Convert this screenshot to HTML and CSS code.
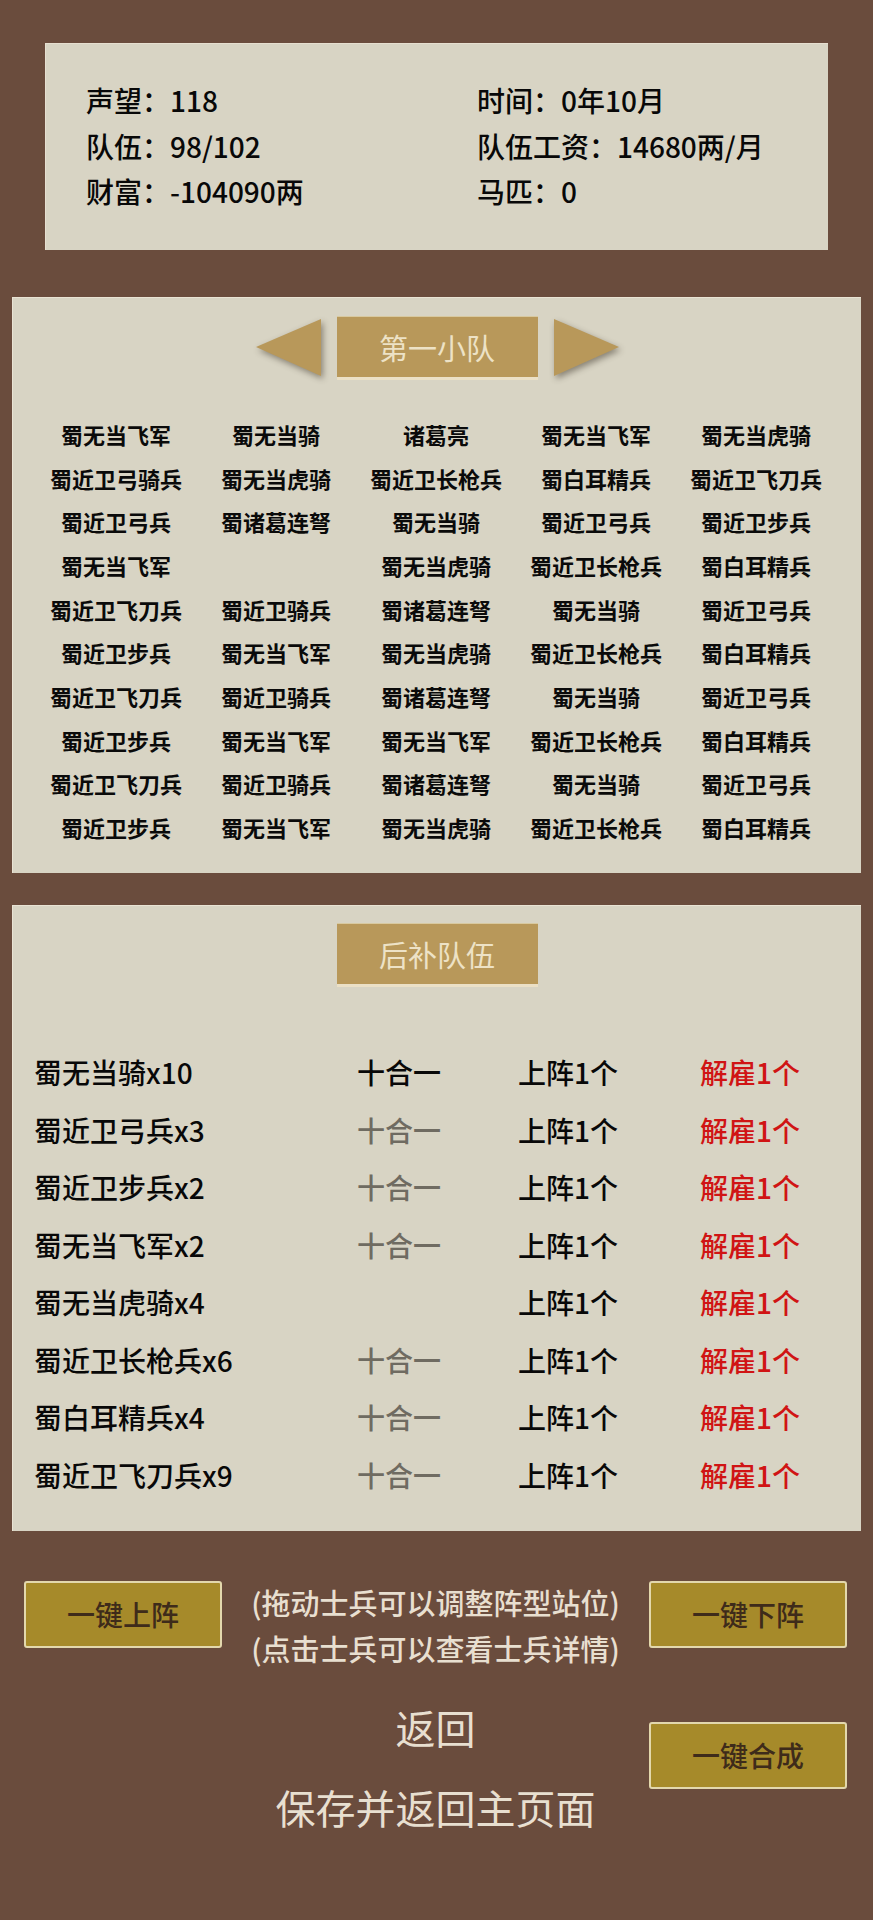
FILE: index.html
```html
<!DOCTYPE html>
<html lang="zh-CN">
<head>
<meta charset="utf-8">
<title>队伍</title>
<link rel="stylesheet" href="styles.css">
</head>
<body>
<div class="page">
  <section class="stats">
    <div class="stat">声望：118</div>
    <div class="stat">时间：0年10月</div>
    <div class="stat">队伍：98/102</div>
    <div class="stat">队伍工资：14680两/月</div>
    <div class="stat">财富：-104090两</div>
    <div class="stat">马匹：0</div>
  </section>

  <section class="panel squad">
    <div class="head">
      <svg class="arrow" width="69" height="60" viewBox="0 0 69 60"><polygon points="2,29 67,1 67,58" fill="#b8985a"/></svg>
      <div class="title">第一小队</div>
      <svg class="arrow" width="69" height="60" viewBox="0 0 69 60"><polygon points="67,29 2,1 2,58" fill="#b8985a"/></svg>
    </div>
    <div class="grid">
      <div>蜀无当飞军</div><div>蜀无当骑</div><div>诸葛亮</div><div>蜀无当飞军</div><div>蜀无当虎骑</div>
      <div>蜀近卫弓骑兵</div><div>蜀无当虎骑</div><div>蜀近卫长枪兵</div><div>蜀白耳精兵</div><div>蜀近卫飞刀兵</div>
      <div>蜀近卫弓兵</div><div>蜀诸葛连弩</div><div>蜀无当骑</div><div>蜀近卫弓兵</div><div>蜀近卫步兵</div>
      <div>蜀无当飞军</div><div></div><div>蜀无当虎骑</div><div>蜀近卫长枪兵</div><div>蜀白耳精兵</div>
      <div>蜀近卫飞刀兵</div><div>蜀近卫骑兵</div><div>蜀诸葛连弩</div><div>蜀无当骑</div><div>蜀近卫弓兵</div>
      <div>蜀近卫步兵</div><div>蜀无当飞军</div><div>蜀无当虎骑</div><div>蜀近卫长枪兵</div><div>蜀白耳精兵</div>
      <div>蜀近卫飞刀兵</div><div>蜀近卫骑兵</div><div>蜀诸葛连弩</div><div>蜀无当骑</div><div>蜀近卫弓兵</div>
      <div>蜀近卫步兵</div><div>蜀无当飞军</div><div>蜀无当飞军</div><div>蜀近卫长枪兵</div><div>蜀白耳精兵</div>
      <div>蜀近卫飞刀兵</div><div>蜀近卫骑兵</div><div>蜀诸葛连弩</div><div>蜀无当骑</div><div>蜀近卫弓兵</div>
      <div>蜀近卫步兵</div><div>蜀无当飞军</div><div>蜀无当虎骑</div><div>蜀近卫长枪兵</div><div>蜀白耳精兵</div>
    </div>
  </section>

  <section class="panel reserve">
    <div class="head">
      <div class="title">后补队伍</div>
    </div>
    <div class="list">
      <div class="row"><span class="name">蜀无当骑x10</span><span class="merge on">十合一</span><span class="up">上阵1个</span><span class="fire">解雇1个</span></div>
      <div class="row"><span class="name">蜀近卫弓兵x3</span><span class="merge">十合一</span><span class="up">上阵1个</span><span class="fire">解雇1个</span></div>
      <div class="row"><span class="name">蜀近卫步兵x2</span><span class="merge">十合一</span><span class="up">上阵1个</span><span class="fire">解雇1个</span></div>
      <div class="row"><span class="name">蜀无当飞军x2</span><span class="merge">十合一</span><span class="up">上阵1个</span><span class="fire">解雇1个</span></div>
      <div class="row"><span class="name">蜀无当虎骑x4</span><span class="merge"></span><span class="up">上阵1个</span><span class="fire">解雇1个</span></div>
      <div class="row"><span class="name">蜀近卫长枪兵x6</span><span class="merge">十合一</span><span class="up">上阵1个</span><span class="fire">解雇1个</span></div>
      <div class="row"><span class="name">蜀白耳精兵x4</span><span class="merge">十合一</span><span class="up">上阵1个</span><span class="fire">解雇1个</span></div>
      <div class="row"><span class="name">蜀近卫飞刀兵x9</span><span class="merge">十合一</span><span class="up">上阵1个</span><span class="fire">解雇1个</span></div>
    </div>
  </section>

  <section class="bottom">
    <div class="side">
      <div class="btn">一键上阵</div>
    </div>
    <div class="center">
      <div class="hint">(拖动士兵可以调整阵型站位)</div>
      <div class="hint">(点击士兵可以查看士兵详情)</div>
      <div class="link back">返回</div>
      <div class="link">保存并返回主页面</div>
    </div>
    <div class="side right">
      <div class="btn">一键下阵</div>
      <div class="btn">一键合成</div>
    </div>
  </section>
</div>
</body>
</html>
```

FILE: styles.css
```css
html, body {
  margin: 0;
  padding: 0;
  background: #6a4c3d;
}
body {
  font-family: "Noto Sans CJK SC", "Noto Sans", sans-serif;
  color: #111;
}
.page {
  width: 873px;
  min-height: 1920px;
  padding-top: 43px;
  box-sizing: border-box;
}
.stats {
  margin: 0 45px;
  height: 207px;
  box-sizing: border-box;
  background: #d8d4c4;
  border-top: 1px solid #e6dfd0;
  border-left: 1px solid #e6dfd0;
  padding: 34px 0 0 40px;
  display: grid;
  grid-template-columns: 391px 1fr;
  grid-auto-rows: 45.5px;
  font-size: 28px;
  font-weight: 500;
  line-height: 45.5px;
  color: #080808;
}
.panel {
  margin: 0 12px;
  background: #d8d4c4;
  border-top: 1px solid #e9e3d4;
  border-left: 1px solid #e9e3d4;
  box-sizing: border-box;
}
.squad {
  margin-top: 47px;
  height: 576px;
  padding-top: 18px;
}
.head {
  display: flex;
  justify-content: center;
  align-items: center;
  gap: 14px;
  height: 64px;
}
.arrow {
  display: block;
  filter: drop-shadow(2px 3px 3px rgba(40, 30, 20, 0.45));
}
.title {
  width: 201px;
  height: 64px;
  box-sizing: border-box;
  background: #b8985a;
  border-bottom: 3px solid #ebe0c6;
  border-top: 1px solid #d8c9a0;
  color: #ede2c6;
  font-size: 29px;
  line-height: 60px;
  text-align: center;
}
.grid {
  margin-top: 33px;
  padding: 0 25px 0 23px;
  display: grid;
  grid-template-columns: repeat(5, 160px);
  grid-auto-rows: 43.67px;
  font-size: 22px;
  font-weight: 700;
  line-height: 43.67px;
  text-align: center;
  color: #0a0a0a;
}
.reserve {
  margin-top: 32px;
  height: 626px;
  padding-top: 17px;
}
.list {
  margin-top: 57px;
  padding-left: 21px;
}
.row {
  display: grid;
  grid-template-columns: 323px 161px 182px 1fr;
  height: 57.5px;
  line-height: 57.5px;
  font-size: 28px;
  font-weight: 500;
  white-space: nowrap;
}
.name { color: #080808; }
.merge { color: #6f6b61; }
.merge.on { color: #080808; }
.up { color: #080808; }
.fire { color: #d01414; }
.bottom {
  margin-top: 50px;
  display: flex;
  padding: 0 26px 0 24px;
}
.side {
  width: 198px;
  display: flex;
  flex-direction: column;
  gap: 74px;
}
.btn {
  width: 198px;
  height: 67px;
  box-sizing: border-box;
  background: #a68a2a;
  border: 2px solid #e3d8ad;
  border-radius: 3px;
  color: #3e2b1a;
  font-size: 28px;
  font-weight: 500;
  line-height: 62px;
  text-align: center;
}
.center {
  flex: 1;
  display: flex;
  flex-direction: column;
  align-items: center;
  color: #e8dfd0;
}
.hint {
  font-size: 29px;
  font-weight: 500;
  line-height: 46px;
  white-space: nowrap;
}
.hint:first-child { margin-top: -2px; }
.link {
  font-size: 40px;
  line-height: 80px;
}
.back { margin-top: 16px; }
```
